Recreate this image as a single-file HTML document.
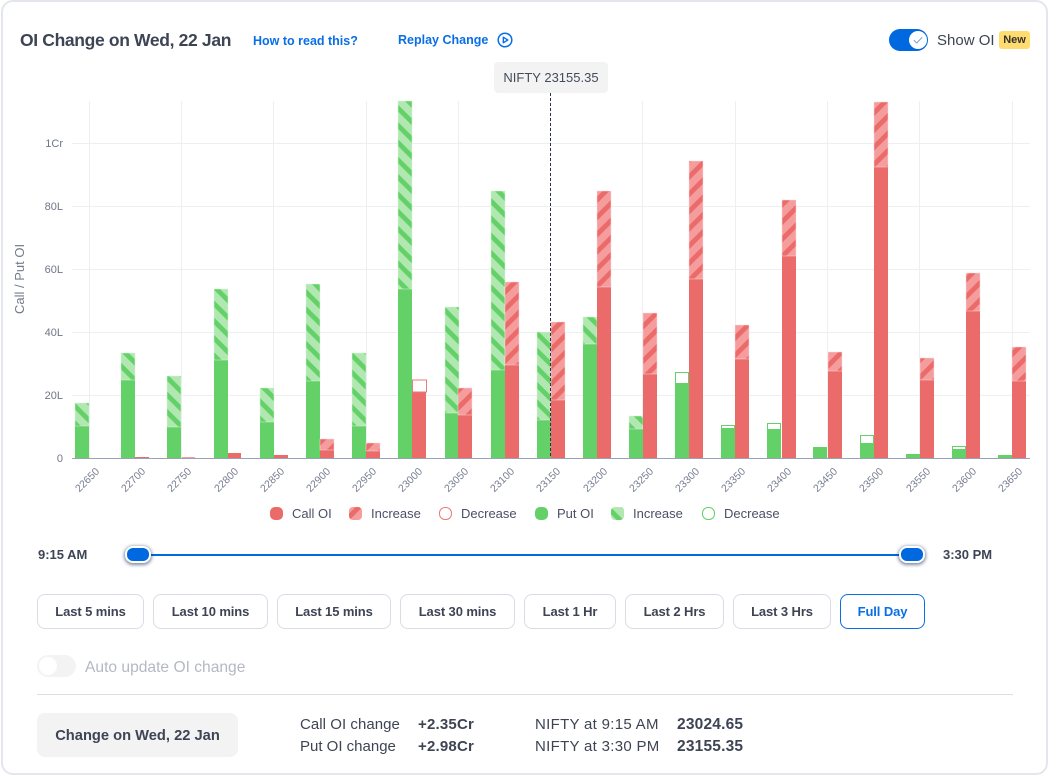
<!DOCTYPE html>
<html><head><meta charset="utf-8">
<style>
html,body{margin:0;padding:0;background:#fff;width:1050px;height:777px;overflow:hidden}
body{font-family:"Liberation Sans",Arial,sans-serif;color:#3d4454;position:relative}
.card{position:absolute;left:1px;top:0;width:1043px;height:771px;border:2px solid #e3e6ed;border-radius:12px;background:#fff}
.t{position:absolute;white-space:nowrap;line-height:1}
.b{font-weight:bold}
.blue{color:#0a6fe6}
.btn{position:absolute;top:594px;height:33px;border:1px solid #d9dce4;border-radius:8px;background:#fff;text-align:center;font-size:13px;font-weight:bold;line-height:33px;letter-spacing:-.1px;box-sizing:content-box}
.h{position:absolute;top:546px;width:22px;height:13px;border:2px solid #fff;border-radius:8px;background:#0069e0;box-shadow:0 1px 3px 1px rgba(30,50,90,.55)}
</style></head><body>
<div class="card"></div>

<div class="t b" style="left:20px;top:32px;font-size:17.5px;letter-spacing:-.35px">OI Change on Wed, 22 Jan</div>
<div class="t b blue" style="left:253px;top:35px;font-size:12.5px">How to read this?</div>
<div class="t b blue" style="left:398px;top:34px;font-size:12.5px">Replay Change</div>
<svg style="position:absolute;left:496px;top:31px" width="18" height="18"><circle cx="9" cy="9" r="6.8" fill="none" stroke="#0a6fe6" stroke-width="1.5"/><path d="M7.3 6.2 L11.8 9 L7.3 11.8 Z" fill="none" stroke="#0a6fe6" stroke-width="1.4" stroke-linejoin="round"/></svg>

<div style="position:absolute;left:889px;top:29px;width:39px;height:22px;border-radius:11px;background:#0069e0"></div>
<svg style="position:absolute;left:907px;top:29px" width="22" height="22"><circle cx="11" cy="11" r="9" fill="#fff"/><path d="M6.8 11.2 L9.8 14 L15.2 8.2" fill="none" stroke="#7ba7e0" stroke-width="1.1"/></svg>
<div class="t" style="left:937px;top:33px;font-size:15px">Show OI</div>
<div class="t b" style="left:999px;top:31px;width:31px;height:18px;background:#ffdc70;border-radius:3px;text-align:center;font-size:11px;line-height:18px;color:#33302a">New</div>

<svg style="position:absolute;left:0;top:0" width="1050" height="530" viewBox="0 0 1050 530" font-family="'Liberation Sans',Arial,sans-serif">
<defs>
<pattern id="g" width="12.2" height="12.2" patternUnits="userSpaceOnUse" patternTransform="rotate(45 0 0)"><rect width="12.2" height="12.2" fill="#b1e8b1"/><rect width="12.2" height="4.8" fill="#63d168"/></pattern>
<pattern id="r" width="12.2" height="12.2" patternUnits="userSpaceOnUse" patternTransform="rotate(-45 0 0)"><rect width="12.2" height="12.2" fill="#f59c9c"/><rect width="12.2" height="4.8" fill="#eb6a6a"/></pattern>
</defs>
<g stroke="#eeeff3" stroke-width="1">
<path d="M72 143.5H1030M72 206.5H1030M72 269.5H1030M72 332.5H1030M72 395.5H1030" fill="none"/>
<path d="M89.5 101V458M181.5 101V458M273.5 101V458M366.5 101V458M458.5 101V458M550.5 101V458M642.5 101V458M735.5 101V458M827.5 101V458M919.5 101V458M1012.5 101V458" fill="none"/>
</g>
<g fill="#6f7687" font-size="11" text-anchor="end">
<text x="63" y="147">1Cr</text><text x="63" y="210">80L</text><text x="63" y="273">60L</text><text x="63" y="336">40L</text><text x="63" y="399">20L</text><text x="63" y="462">0</text>
</g>
<text transform="translate(24 314) rotate(-90)" fill="#747b8c" font-size="13">Call / Put OI</text>

<!-- Put OI -->
<g fill="#63d168">
<rect x="75" y="426" width="14" height="32"/><rect x="121" y="380" width="14" height="78"/><rect x="167" y="427" width="14" height="31"/><rect x="214" y="360" width="14" height="98"/><rect x="260" y="422" width="14" height="36"/><rect x="306" y="381" width="14" height="77"/><rect x="352" y="426" width="14" height="32"/><rect x="398" y="289" width="14" height="169"/><rect x="445" y="413" width="13" height="45"/><rect x="491" y="370" width="14" height="88"/><rect x="537" y="420" width="14" height="38"/><rect x="583" y="344" width="14" height="114"/><rect x="629" y="429" width="14" height="29"/><rect x="675" y="384" width="14" height="74"/><rect x="721" y="428" width="14" height="30"/><rect x="767" y="430" width="14" height="28"/><rect x="813" y="448" width="14" height="10"/><rect x="860" y="443" width="14" height="15"/><rect x="906" y="454" width="14" height="4"/><rect x="952" y="450" width="14" height="8"/><rect x="998" y="455" width="14" height="3"/>
</g>
<g fill="url(#g)" stroke="#d8f3d8" stroke-width=".5">
<rect x="75" y="403" width="14" height="23"/><rect x="121" y="353" width="14" height="27"/><rect x="167" y="376" width="14" height="51"/><rect x="214" y="289" width="14" height="71"/><rect x="260" y="388" width="14" height="34"/><rect x="306" y="284" width="14" height="97"/><rect x="352" y="353" width="14" height="73"/><rect x="398" y="101" width="14" height="188"/><rect x="445" y="307" width="14" height="106"/><rect x="491" y="191" width="14" height="179"/><rect x="537" y="332" width="14" height="88"/><rect x="583" y="317" width="14" height="27"/><rect x="629" y="416" width="14" height="13"/>
</g>
<g fill="#fff" stroke="#63d168" stroke-width="1">
<rect x="675.5" y="372.5" width="13" height="11"/><rect x="721.5" y="425.5" width="13" height="3"/><rect x="767.5" y="423.5" width="13" height="6"/><rect x="813.5" y="447.5" width="13" height="1"/><rect x="860.5" y="435.5" width="13" height="8"/><rect x="952.5" y="446.5" width="13" height="3"/>
</g>

<!-- Call OI -->
<g fill="#eb6a6a">
<rect x="135" y="457" width="14" height="1"/><rect x="228" y="453" width="13" height="5"/><rect x="274" y="455" width="14" height="3"/><rect x="320" y="450" width="14" height="8"/><rect x="366" y="451" width="14" height="7"/><rect x="412" y="392" width="14" height="66"/><rect x="458" y="415" width="14" height="43"/><rect x="505" y="365" width="14" height="93"/><rect x="551" y="400" width="14" height="58"/><rect x="597" y="287" width="14" height="171"/><rect x="643" y="374" width="14" height="84"/><rect x="689" y="279" width="14" height="179"/><rect x="735" y="359" width="14" height="99"/><rect x="782" y="256" width="14" height="202"/><rect x="828" y="371" width="14" height="87"/><rect x="874" y="167" width="14" height="291"/><rect x="920" y="380" width="14" height="78"/><rect x="966" y="311" width="14" height="147"/><rect x="1012" y="381" width="14" height="77"/>
</g>
<g fill="url(#r)" stroke="#fbdcdc" stroke-width=".5">
<rect x="320" y="439" width="14" height="11"/><rect x="366" y="443" width="14" height="8"/><rect x="458" y="388" width="14" height="27"/><rect x="505" y="282" width="14" height="83"/><rect x="551" y="322" width="14" height="78"/><rect x="597" y="191" width="14" height="96"/><rect x="643" y="313" width="14" height="61"/><rect x="689" y="161" width="14" height="118"/><rect x="735" y="325" width="14" height="34"/><rect x="782" y="200" width="14" height="56"/><rect x="828" y="352" width="14" height="19"/><rect x="874" y="102" width="14" height="65"/><rect x="920" y="358" width="14" height="22"/><rect x="966" y="273" width="14" height="38"/><rect x="1012" y="347" width="14" height="34"/>
</g>
<rect x="412.5" y="380" width="14" height="12" fill="#fff" stroke="#eb7a7a" stroke-width="1"/>
<rect x="182" y="457" width="13" height="1" fill="#f59c9c"/>

<path d="M72 458.5H1030" stroke="#9aa2b8" stroke-width="1"/>
<path d="M550.5 93V458" stroke="#2b3250" stroke-width="1" stroke-dasharray="3 2" fill="none"/>

<g fill="#777e92" font-size="10.5" text-anchor="end">
<text transform="translate(100 472) rotate(-45)">22650</text>
<text transform="translate(146 472) rotate(-45)">22700</text>
<text transform="translate(192 472) rotate(-45)">22750</text>
<text transform="translate(239 472) rotate(-45)">22800</text>
<text transform="translate(285 472) rotate(-45)">22850</text>
<text transform="translate(331 472) rotate(-45)">22900</text>
<text transform="translate(377 472) rotate(-45)">22950</text>
<text transform="translate(423 472) rotate(-45)">23000</text>
<text transform="translate(469 472) rotate(-45)">23050</text>
<text transform="translate(515 472) rotate(-45)">23100</text>
<text transform="translate(561 472) rotate(-45)">23150</text>
<text transform="translate(608 472) rotate(-45)">23200</text>
<text transform="translate(654 472) rotate(-45)">23250</text>
<text transform="translate(700 472) rotate(-45)">23300</text>
<text transform="translate(746 472) rotate(-45)">23350</text>
<text transform="translate(792 472) rotate(-45)">23400</text>
<text transform="translate(838 472) rotate(-45)">23450</text>
<text transform="translate(884 472) rotate(-45)">23500</text>
<text transform="translate(931 472) rotate(-45)">23550</text>
<text transform="translate(977 472) rotate(-45)">23600</text>
<text transform="translate(1023 472) rotate(-45)">23650</text>
</g>

<!-- Legend -->
<rect x="270" y="507" width="13" height="13" rx="5" fill="#eb6a6a"/>
<rect x="349" y="507" width="13" height="13" rx="4" fill="url(#r)"/>
<rect x="439.5" y="507.5" width="12" height="12" rx="5.5" fill="#fff" stroke="#eb7a7a"/>
<rect x="535" y="507" width="13" height="13" rx="5" fill="#63d168"/>
<rect x="611" y="507" width="13" height="13" rx="4" fill="url(#g)"/>
<rect x="702.5" y="507.5" width="12" height="12" rx="5.5" fill="#fff" stroke="#63d168"/>
<g fill="#4a5166" font-size="13">
<text x="292" y="518">Call OI</text><text x="371" y="518">Increase</text><text x="461" y="518">Decrease</text><text x="557" y="518">Put OI</text><text x="633" y="518">Increase</text><text x="724" y="518">Decrease</text>
</g>
</svg>

<div class="t" style="left:494px;top:62px;width:114px;height:31px;background:#f3f3f3;border-radius:4px;text-align:center;font-size:13px;line-height:31px;color:#444b5c">NIFTY 23155.35</div>

<div class="t b" style="left:38px;top:548px;font-size:13px">9:15 AM</div>
<div style="position:absolute;left:138px;top:554px;width:774px;height:2px;background:#0069e0"></div>
<div class="h" style="left:125px"></div>
<div class="h" style="left:899px"></div>
<div class="t b" style="left:943px;top:548px;font-size:13px">3:30 PM</div>

<div class="btn" style="left:37px;width:105px">Last 5 mins</div>
<div class="btn" style="left:153px;width:113px">Last 10 mins</div>
<div class="btn" style="left:277px;width:112px">Last 15 mins</div>
<div class="btn" style="left:400px;width:113px">Last 30 mins</div>
<div class="btn" style="left:524px;width:90px">Last 1 Hr</div>
<div class="btn" style="left:625px;width:97px">Last 2 Hrs</div>
<div class="btn" style="left:733px;width:96px">Last 3 Hrs</div>
<div class="btn blue" style="left:840px;width:83px;border-color:#0a6fe6">Full Day</div>

<div style="position:absolute;left:37px;top:655px;width:39px;height:22px;border-radius:11px;background:#f3f3f3"></div>
<div style="position:absolute;left:39px;top:657px;width:18px;height:18px;border-radius:9px;background:#fff"></div>
<div class="t" style="left:85px;top:660px;font-size:15.6px;color:#b4b8c4">Auto update OI change</div>

<div style="position:absolute;left:37px;top:694px;width:976px;height:1px;background:#dcdfe4"></div>
<div class="t b" style="left:37px;top:713px;width:201px;height:44px;background:#f3f3f3;border-radius:8px;text-align:center;font-size:14.7px;line-height:46px">Change on Wed, 22 Jan</div>

<div class="t" style="left:300px;top:717px;font-size:15px;letter-spacing:.05px">Call OI change</div>
<div class="t" style="left:300px;top:739px;font-size:15px">Put OI change</div>
<div class="t b" style="left:418px;top:717px;font-size:15px;letter-spacing:.2px">+2.35Cr</div>
<div class="t b" style="left:418px;top:739px;font-size:15px;letter-spacing:.2px">+2.98Cr</div>
<div class="t" style="left:535px;top:717px;font-size:15px;letter-spacing:.3px">NIFTY at 9:15 AM</div>
<div class="t" style="left:535px;top:739px;font-size:15px;letter-spacing:.3px">NIFTY at 3:30 PM</div>
<div class="t b" style="left:677px;top:717px;font-size:15.5px;letter-spacing:.2px">23024.65</div>
<div class="t b" style="left:677px;top:739px;font-size:15.5px;letter-spacing:.2px">23155.35</div>
</body></html>
